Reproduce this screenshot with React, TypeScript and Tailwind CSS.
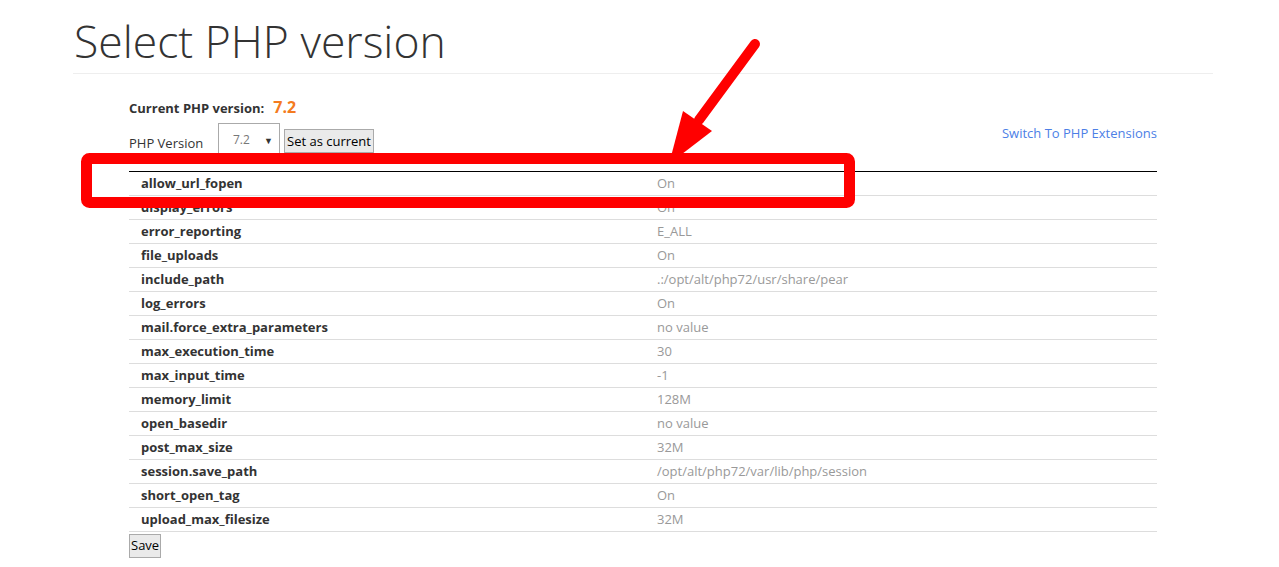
const rows: [string, string][] = [
  ["allow_url_fopen", "On"],
  ["display_errors", "On"],
  ["error_reporting", "E_ALL"],
  ["file_uploads", "On"],
  ["include_path", ".:/opt/alt/php72/usr/share/pear"],
  ["log_errors", "On"],
  ["mail.force_extra_parameters", "no value"],
  ["max_execution_time", "30"],
  ["max_input_time", "-1"],
  ["memory_limit", "128M"],
  ["open_basedir", "no value"],
  ["post_max_size", "32M"],
  ["session.save_path", "/opt/alt/php72/var/lib/php/session"],
  ["short_open_tag", "On"],
  ["upload_max_filesize", "32M"],
];

export default function App() {
  return (
    <div className="relative w-[1279px] h-[567px] overflow-hidden bg-white text-[#333] font-['Open_Sans',sans-serif]">
      <div className="ml-[73px] w-[1140px]">
        {/* Title */}
        <h1 className="pt-[17px] pb-[8px] pl-px text-[44.5px] leading-[48px] font-light text-[#333] border-b border-[#eee]">
          Select PHP version
        </h1>

        <div className="px-[56px]">
          {/* Current version */}
          <div className="mt-[21px] flex items-baseline gap-[9px]">
            <span className="text-[13px] font-bold">Current PHP version:</span>
            <span className="text-[16px] font-bold text-[#f47b20]">7.2</span>
          </div>

          {/* Version selector */}
          <div className="mt-[4px] flex items-start justify-between h-[48px]">
            <div className="flex items-start">
              <span className="mt-[11px] w-[89px] text-[13px]">PHP Version</span>
              <div className="w-[62px] h-[40px] border border-[#aaa] flex items-start justify-between pt-[7px] pl-[14px] pr-[6px]">
                <span className="text-[12px] text-[#777]">7.2</span>
                <span className="text-[9px] text-[#333] mt-[3px]">▼</span>
              </div>
              <button className="ml-[4px] mt-[6px] h-[24px] px-[2px] border border-[#aaa] bg-[#eaeaea] text-[13px] text-black leading-none">
                Set as current
              </button>
            </div>
            <a className="mt-[1px] text-[13px] text-[#4d7fe6]">Switch To PHP Extensions</a>
          </div>

          {/* Settings table */}
          <table className="w-full border-t border-black border-collapse">
            <tbody>
              {rows.map(([name, value]) => (
                <tr key={name} className="h-[24px] border-b border-[#ddd]">
                  <td className="w-1/2 pl-[12px] text-[13px] font-bold leading-[23px]">{name}</td>
                  <td className="pl-[14px] text-[13px] text-[#999] leading-[23px]">{value}</td>
                </tr>
              ))}
            </tbody>
          </table>

          <button className="mt-[1px] h-[24px] px-[1px] border border-[#aaa] bg-[#eaeaea] text-[13px] text-black leading-none">
            Save
          </button>
        </div>
      </div>

      {/* Annotation overlay */}
      <svg className="absolute inset-0 pointer-events-none" width="1279" height="567">
        <rect x="86.5" y="158.5" width="763" height="44" rx="3" fill="none" stroke="#ff0000" strokeWidth="11" />
        <line x1="755" y1="44" x2="699" y2="120" stroke="#ff0000" strokeWidth="10" strokeLinecap="round" />
        <polygon points="669,164 683,111 712,131" fill="#ff0000" />
      </svg>
    </div>
  );
}
